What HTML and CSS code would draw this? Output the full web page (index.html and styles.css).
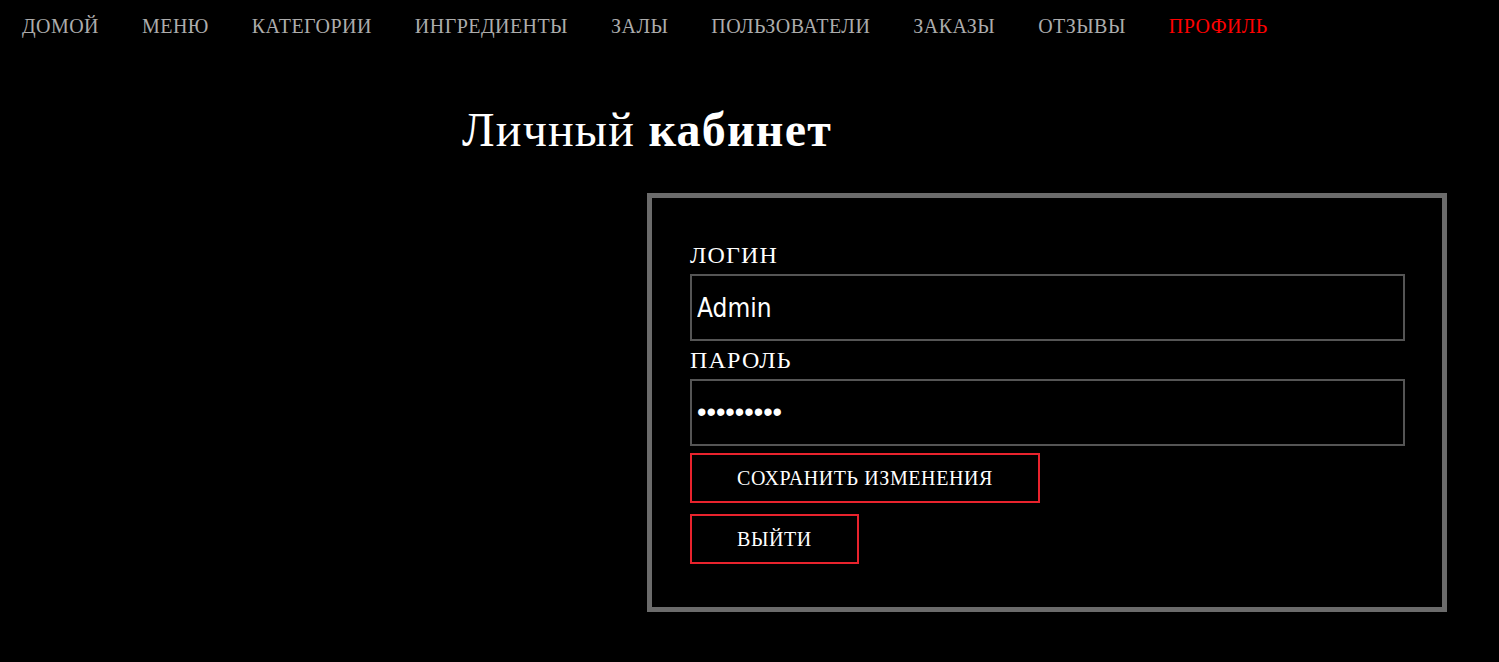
FILE: index.html
```html
<!DOCTYPE html>
<html lang="ru">
<head>
<meta charset="utf-8">
<title>Личный кабинет</title>
<link rel="stylesheet" href="styles.css">
</head>
<body>
<nav class="nav">
  <a class="nav-link" href="#">ДОМОЙ</a>
  <a class="nav-link" href="#">МЕНЮ</a>
  <a class="nav-link" href="#">КАТЕГОРИИ</a>
  <a class="nav-link" href="#">ИНГРЕДИЕНТЫ</a>
  <a class="nav-link" href="#">ЗАЛЫ</a>
  <a class="nav-link" href="#">ПОЛЬЗОВАТЕЛИ</a>
  <a class="nav-link" href="#">ЗАКАЗЫ</a>
  <a class="nav-link" href="#">ОТЗЫВЫ</a>
  <a class="nav-link nav-link-active" href="#">ПРОФИЛЬ</a>
</nav>
<main class="page">
  <h1 class="title">Личный <b class="title-bold">кабинет</b></h1>
  <section class="card">
    <form class="form">
      <label class="label" for="login">ЛОГИН</label>
      <input class="field" id="login" type="text" value="Admin">
      <label class="label" for="password">ПАРОЛЬ</label>
      <input class="field field-password" id="password" type="password" value="123456789">
      <button class="btn btn-save" type="button">СОХРАНИТЬ ИЗМЕНЕНИЯ</button>
      <button class="btn btn-exit" type="button">ВЫЙТИ</button>
    </form>
  </section>
</main>
</body>
</html>
```
FILE: styles.css
```css
html, body {
  margin: 0;
  padding: 0;
  background: #000;
}
body {
  font-family: "Liberation Serif", "Times New Roman", serif;
  color: #fff;
}
.nav {
  display: flex;
  padding-top: 15px;
}
.nav-link {
  padding: 0 21px 0 22px;
  font-size: 20px;
  line-height: 23px;
  letter-spacing: 0.45px;
  color: #acacac;
  text-decoration: none;
}
.nav-link-active {
  color: #ff0000;
}
.page {
  display: flex;
  flex-direction: column;
  padding-left: 462px;
}
.title {
  margin: 65px 0 0;
  font-size: 48px;
  line-height: 53px;
  letter-spacing: 1.2px;
  font-weight: normal;
  color: #fff;
}
.title-bold {
  font-weight: bold;
}
.card {
  margin: 37px 0 0 185px;
  width: 790px;
  height: 409px;
  border: 5px solid #6b6b6b;
  box-sizing: content-box;
}
.form {
  display: flex;
  flex-direction: column;
  align-items: flex-start;
  padding: 43px 38px 0 38px;
}
.label {
  font-size: 24px;
  line-height: 28px;
  letter-spacing: 1.2px;
  color: #fff;
  margin-bottom: 5px;
}
.field {
  box-sizing: border-box;
  width: 715px;
  height: 67px;
  margin: 0 0 5px;
  padding: 0 5px;
  background: #000;
  border: 2px solid #555;
  color: #fff;
  font-family: "Liberation Sans Narrow", "DejaVu Sans Condensed", sans-serif;
  font-size: 26px;
  outline: none;
}
.field-password {
  font-family: "Liberation Sans", Arial, sans-serif;
  font-size: 27px;
}
.btn {
  box-sizing: border-box;
  height: 50px;
  padding: 0 45px;
  background: #000;
  border: 2px solid #e8232d;
  color: #fff;
  font-family: "Liberation Serif", "Times New Roman", serif;
  font-size: 20px;
  letter-spacing: 0.6px;
  cursor: pointer;
}
.btn-save {
  margin-top: 2px;
}
.btn-exit {
  margin-top: 11px;
}
```
